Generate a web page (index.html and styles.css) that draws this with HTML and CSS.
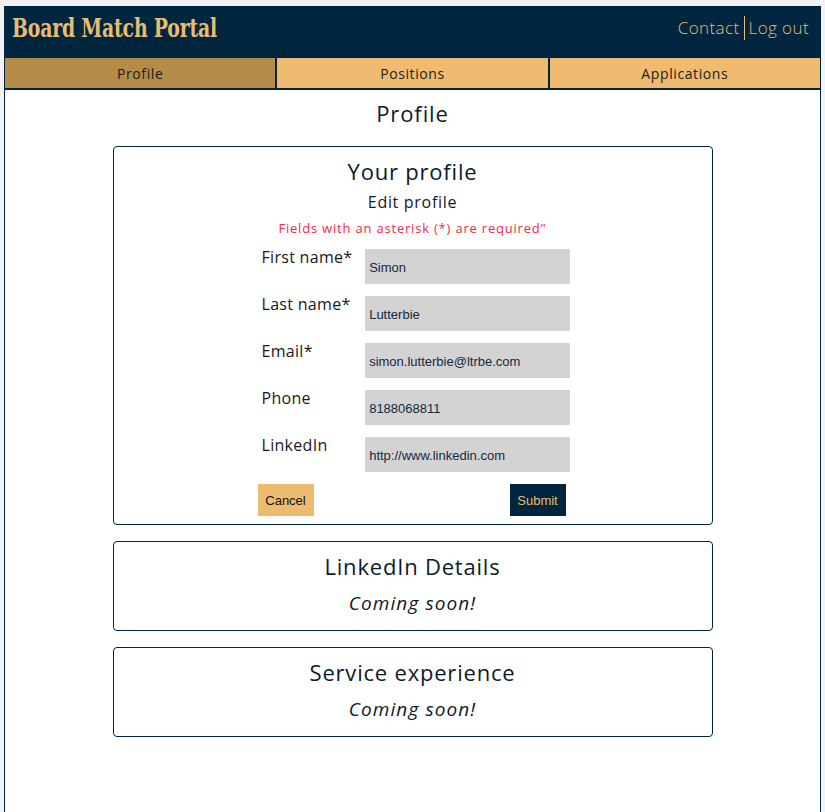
FILE: index.html
```html
<!DOCTYPE html>
<html lang="en">
<head>
<meta charset="utf-8">
<title>Board Match Portal</title>
<link rel="stylesheet" href="styles.css">
</head>
<body>
<div class="page">
  <header class="topbar">
    <div class="brand">Board Match Portal</div>
    <nav class="toplinks">
      <a href="#" class="toplink">Contact</a>
      <span class="toplink-sep"></span>
      <a href="#" class="toplink">Log out</a>
    </nav>
  </header>
  <nav class="tabs">
    <a href="#" class="tab tab-active">Profile</a>
    <a href="#" class="tab">Positions</a>
    <a href="#" class="tab">Applications</a>
  </nav>
  <main class="content">
    <h1 class="page-title">Profile</h1>
    <section class="card">
      <h2 class="card-title">Your profile</h2>
      <p class="card-sub">Edit profile</p>
      <p class="required-note">Fields with an asterisk (*) are required"</p>
      <form class="profile-form">
        <div class="form-row">
          <label class="form-label">First name*</label>
          <input class="form-input" type="text" value="Simon">
        </div>
        <div class="form-row">
          <label class="form-label">Last name*</label>
          <input class="form-input" type="text" value="Lutterbie">
        </div>
        <div class="form-row">
          <label class="form-label">Email*</label>
          <input class="form-input" type="text" value="simon.lutterbie@ltrbe.com">
        </div>
        <div class="form-row">
          <label class="form-label">Phone</label>
          <input class="form-input" type="text" value="8188068811">
        </div>
        <div class="form-row">
          <label class="form-label">LinkedIn</label>
          <input class="form-input" type="text" value="http://www.linkedin.com">
        </div>
        <div class="form-actions">
          <button type="button" class="btn btn-cancel">Cancel</button>
          <button type="button" class="btn btn-submit">Submit</button>
        </div>
      </form>
    </section>
    <section class="card card-small">
      <h2 class="card-title">LinkedIn Details</h2>
      <p class="coming">Coming soon!</p>
    </section>
    <section class="card card-small">
      <h2 class="card-title">Service experience</h2>
      <p class="coming">Coming soon!</p>
    </section>
  </main>
</div>
</body>
</html>
```

FILE: styles.css
```css
* { box-sizing: border-box; }

html, body { margin: 0; padding: 0; }

body {
  background: #f3f3f3;
  padding: 6px 4px 0 4px;
  font-family: "Open Sans", "DejaVu Sans", sans-serif;
  color: #0b1a2c;
}

.page {
  width: 817px;
  min-height: 806px;
  background: #ffffff;
  border-left: 1px solid #00263f;
  border-right: 1px solid #00263f;
  display: flex;
  flex-direction: column;
}

.topbar {
  height: 51px;
  background: #00263f;
  display: flex;
  justify-content: space-between;
  align-items: flex-start;
  padding: 6px 11px 0 7px;
}

.brand {
  font-family: "DejaVu Serif", "Liberation Serif", serif;
  font-weight: bold;
  font-stretch: condensed;
  font-size: 26px;
  line-height: 32px;
  color: #ebbb70;
  letter-spacing: -0.2px;
  transform: scaleX(0.805);
  transform-origin: left center;
  white-space: nowrap;
}

.toplinks {
  display: flex;
  align-items: center;
  padding-top: 4px;
}

.toplink {
  color: #ebbb70;
  text-decoration: none;
  font-size: 17px;
  font-weight: 300;
  line-height: 22px;
  letter-spacing: 0.4px;
}

.toplink-sep {
  width: 1px;
  height: 24px;
  background: #ebbb70;
  margin: 0 4px;
}

.tabs {
  display: flex;
  gap: 2px;
  background: #00263f;
  border-top: 1px solid #00263f;
  border-bottom: 2px solid #00263f;
}

.tab {
  flex: 1;
  height: 30px;
  background: #eebb70;
  color: #1d1d1d;
  text-decoration: none;
  font-size: 14px;
  letter-spacing: 0.6px;
  display: flex;
  align-items: center;
  justify-content: center;
}

.tab-active { background: #b58b48; }

.content {
  display: flex;
  flex-direction: column;
  align-items: center;
  padding-top: 10px;
}

.page-title {
  margin: 0 0 20px;
  font-size: 22px;
  line-height: 26px;
  font-weight: 500;
  letter-spacing: 0.9px;
}

.card {
  width: 600px;
  border: 1px solid #00263f;
  border-radius: 4px;
  padding: 11px 0 8px;
  margin-bottom: 16px;
  display: flex;
  flex-direction: column;
  align-items: center;
}

.card-small { padding-bottom: 16px; }

.card-title {
  margin: 0;
  font-size: 22px;
  line-height: 26px;
  font-weight: 500;
  letter-spacing: 0.8px;
}

.card-sub {
  margin: 8px 0 0;
  font-size: 16px;
  line-height: 20px;
  letter-spacing: 0.7px;
}

.required-note {
  margin: 8px 0 0;
  font-size: 13px;
  line-height: 16px;
  color: #f2284c;
  letter-spacing: 0.8px;
}

.coming {
  margin: 13px 0 0;
  font-size: 19px;
  line-height: 22px;
  font-style: italic;
  font-weight: 500;
  letter-spacing: 1.1px;
}

.profile-form {
  width: 312px;
  margin: 13px 0 0 2px;
  display: flex;
  flex-direction: column;
  gap: 12px;
}

.form-row {
  display: flex;
  align-items: flex-start;
}

.form-label {
  width: 108px;
  padding-left: 4px;
  font-size: 16px;
  line-height: 16px;
  color: #1a1a1a;
  letter-spacing: 0.3px;
}

.form-input {
  width: 205px;
  height: 35px;
  border: none;
  background: #d3d3d3;
  padding: 2px 4px 0;
  font-family: "Liberation Sans", Arial, sans-serif;
  font-size: 13px;
  color: #14293d;
  outline: none;
}

.form-actions {
  display: flex;
  justify-content: space-between;
  padding-right: 4px;
}

.btn {
  width: 56px;
  height: 32px;
  border: none;
  padding: 0;
  font-family: "Liberation Sans", Arial, sans-serif;
  font-size: 13px;
  cursor: pointer;
}

.btn-cancel { background: #ecbb70; color: #111111; }
.btn-submit { background: #00263f; color: #ebbb70; }
```
